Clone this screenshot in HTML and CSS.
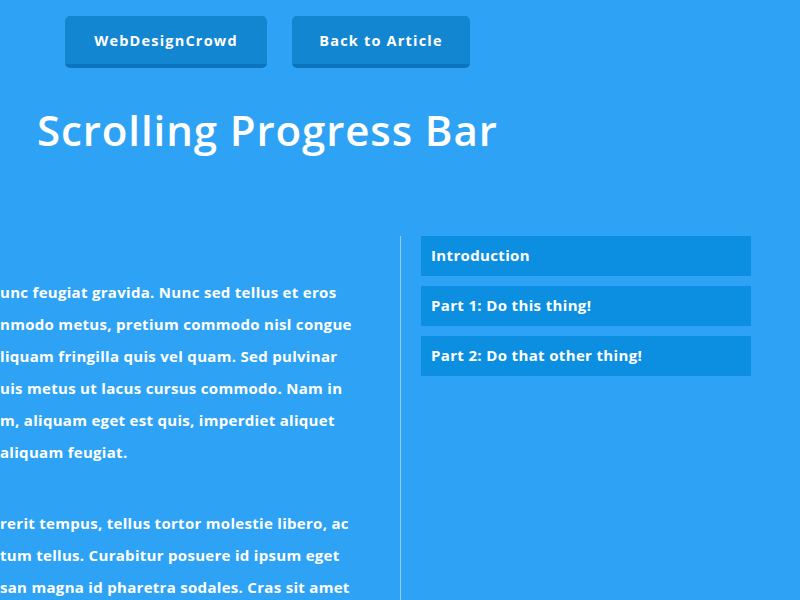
FILE: index.html
```html
<!DOCTYPE html>
<html>
<head>
<meta charset="utf-8">
<link rel="stylesheet" href="styles.css">
</head>
<body>
<header class="top">
  <a class="btn btn-brand" href="#">WebDesignCrowd</a>
  <a class="btn btn-back" href="#">Back to Article</a>
</header>
<h1 class="title">Scrolling Progress Bar</h1>
<main class="layout">
  <article class="content">
    <p class="para">
      <span class="line">unc feugiat gravida. Nunc sed tellus et eros</span>
      <span class="line">nmodo metus, pretium commodo nisl congue</span>
      <span class="line">liquam fringilla quis vel quam. Sed pulvinar</span>
      <span class="line">uis metus ut lacus cursus commodo. Nam in</span>
      <span class="line">m, aliquam eget est quis, imperdiet aliquet</span>
      <span class="line">aliquam feugiat.</span>
    </p>
    <p class="para">
      <span class="line">rerit tempus, tellus tortor molestie libero, ac</span>
      <span class="line">tum tellus. Curabitur posuere id ipsum eget</span>
      <span class="line">san magna id pharetra sodales. Cras sit amet</span>
    </p>
  </article>
  <div class="divider"></div>
  <nav class="toc">
    <a class="toc-item" href="#">Introduction</a>
    <a class="toc-item" href="#">Part 1: Do this thing!</a>
    <a class="toc-item" href="#">Part 2: Do that other thing!</a>
  </nav>
</main>
</body>
</html>
```
FILE: styles.css
```css
html, body {
  margin: 0;
  padding: 0;
  height: 100%;
  overflow: hidden;
}
body {
  display: flex;
  flex-direction: column;
  background: #2ea3f5;
  color: #fff;
  font-family: "Open Sans", "DejaVu Sans", sans-serif;
  font-weight: 700;
}
.top {
  display: flex;
  gap: 25px;
  padding: 16px 0 0 65px;
}
.btn {
  display: block;
  box-sizing: border-box;
  height: 52px;
  line-height: 50px;
  background: #1386d1;
  border-bottom: 4px solid #0b74bc;
  border-radius: 5px;
  color: #fff;
  text-decoration: none;
  text-align: center;
  font-size: 14.5px;
  letter-spacing: 1.2px;
}
.btn-brand { width: 202px; }
.btn-back { width: 178px; }
.title {
  margin: 32px 0 0 37px;
  font-size: 42px;
  line-height: 60px;
  font-weight: 600;
  letter-spacing: 0.9px;
}
.layout {
  display: flex;
  flex: 1;
  min-height: 0;
  margin-top: 76px;
}
.content {
  width: 400px;
  padding-top: 40px;
  overflow: hidden;
}
.para {
  margin: 0 0 39px 0;
}
.line {
  display: block;
  white-space: nowrap;
  font-size: 15px;
  line-height: 32px;
  letter-spacing: 0.3px;
}
.divider {
  width: 1px;
  background: #8fcdf8;
}
.toc {
  display: flex;
  flex-direction: column;
  gap: 10px;
  margin-left: 20px;
  width: 330px;
}
.toc-item {
  display: block;
  height: 40px;
  line-height: 38px;
  padding-left: 10px;
  background: #0c8fe0;
  color: #fff;
  text-decoration: none;
  font-size: 15px;
  letter-spacing: 0.35px;
}
```
